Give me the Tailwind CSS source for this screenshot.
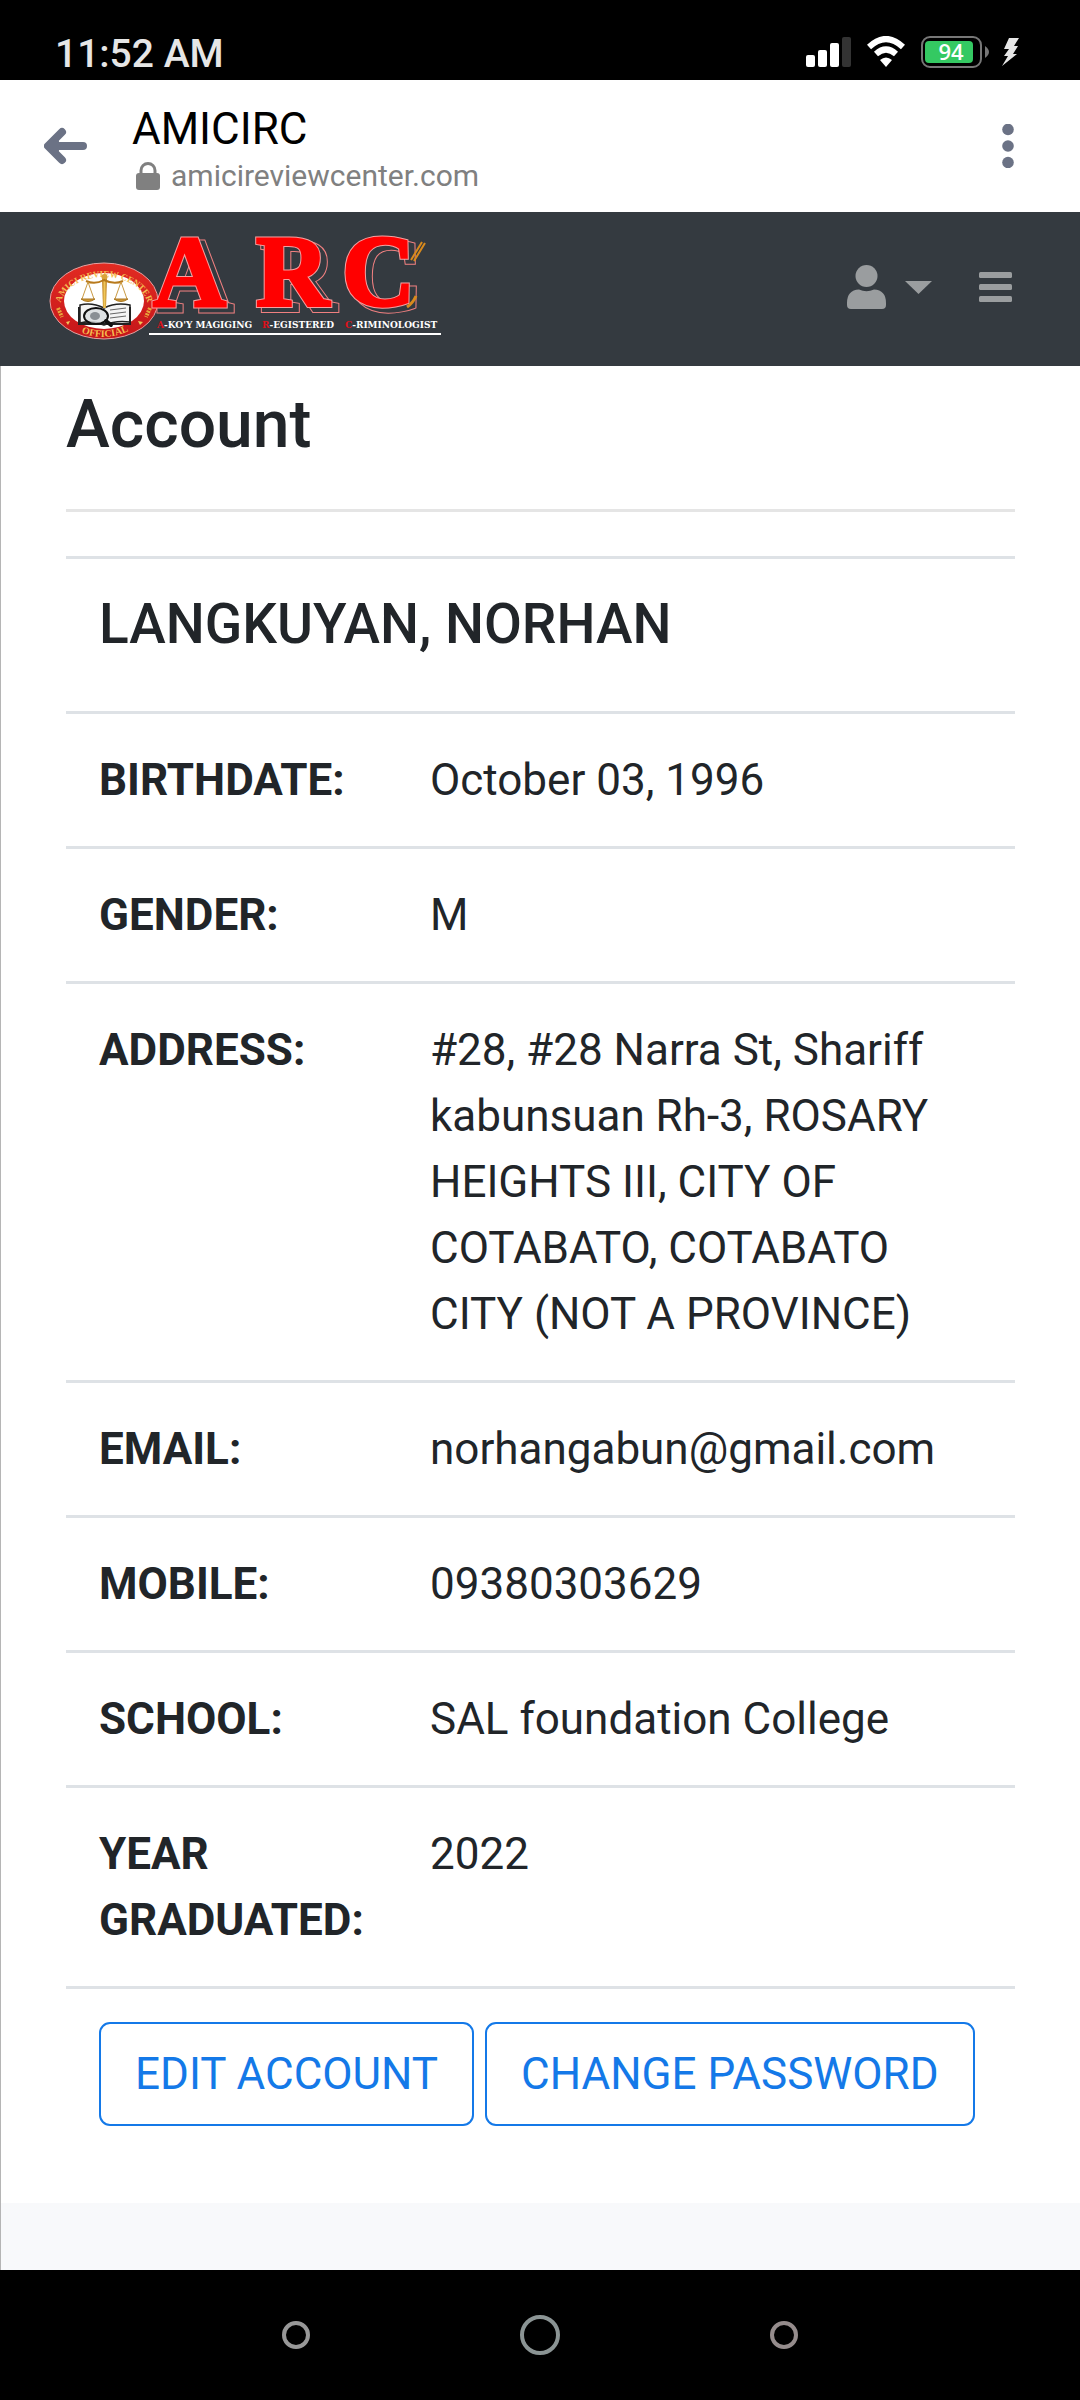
<!DOCTYPE html>
<html lang="en">
<head>
<meta charset="utf-8">
<meta name="viewport" content="width=device-width, initial-scale=1">
<title>AMICIRC</title>
<script src="https://cdn.jsdelivr.net/npm/@tailwindcss/browser@4"></script>
</head>
<body class="flex min-h-screen flex-col bg-black font-[Roboto,sans-serif] text-[#212529]">

<!-- Phone status bar -->
<div class="flex h-20 shrink-0 items-end justify-between bg-black pr-[61px] pb-1 pl-[55px]">
  <span class="text-[39px] leading-[44px] font-medium text-[#e6e6e6]">11:52 AM</span>
  <div class="flex h-12 items-center gap-[16px]">
    <svg class="h-8 w-[45px]" viewBox="0 0 45 32" aria-hidden="true">
      <rect x="0" y="19" width="9" height="12" rx="2" fill="#fff"/><rect x="12" y="14" width="9" height="17" rx="2" fill="#fff"/><rect x="24" y="7" width="9" height="24" rx="2" fill="#fff"/><rect x="36" y="1" width="9" height="30" rx="2" fill="#333"/>
    </svg>
    <svg class="h-8 w-[38px]" viewBox="0 0 38 32" aria-hidden="true">
      <path d="M2 11Q19-5 36 11" fill="none" stroke="#fff" stroke-width="6"/>
      <path d="M9 18Q19 9 29 18" fill="none" stroke="#fff" stroke-width="6"/>
      <path d="M13 24Q19 19 25 24L19 31Z" fill="#fff"/>
    </svg>
    <svg class="h-8 w-[68px]" viewBox="0 0 68 32" role="img" aria-label="Battery 94 percent">
      <rect x="1" y="1" width="59" height="30" rx="8" fill="none" stroke="#777" stroke-width="2"/>
      <rect x="4" y="5" width="48" height="22" rx="4" fill="#34c962"/>
      <path d="M64 10Q72 16 64 22Z" fill="#777"/>
      <text x="30" y="24" text-anchor="middle" font-family="Open Sans, sans-serif" font-weight="600" font-size="22" fill="#fff">94</text>
    </svg>
    <svg class="-ml-1 h-8 w-[18px]" viewBox="0 0 18 32" aria-hidden="true">
      <path d="M8 2H18L13 10H17L12 18H16L1 30L7 20H3L8 13H3Z" fill="#e6e6e6"/>
    </svg>
  </div>
</div>

<!-- In-app browser bar -->
<header class="flex h-[132px] shrink-0 items-center bg-white pr-[58px] pl-[44px]">
  <button type="button" aria-label="Back" class="mr-11">
    <svg class="h-[38px] w-11" viewBox="0 0 44 38" fill="none" stroke="#6b7285" stroke-width="8" stroke-linecap="round" stroke-linejoin="round" aria-hidden="true"><path d="M18 5L4 19L18 33M5 19H39"/><path d="M12 15V23" stroke-width="6"/></svg>
  </button>
  <div class="min-w-0 grow pt-[6px]">
    <div class="text-[44px] leading-[54px] text-black">AMICIRC</div>
    <div class="flex items-center gap-[11px] pl-1 text-[30px] leading-10 text-[#808080]">
      <svg class="h-7 w-6" viewBox="0 0 24 28" aria-hidden="true"><rect x="0" y="11" width="24" height="17" rx="3" fill="#808080"/><path d="M5 12V8.500A7 7 0 0 1 19 8.500V12" fill="none" stroke="#808080" stroke-width="3"/></svg>
      <span>amicireviewcenter.com</span>
    </div>
  </div>
  <button type="button" aria-label="More options" class="px-2">
    <svg class="h-11 w-3" viewBox="0 0 12 44" fill="#6b7285" aria-hidden="true"><circle cx="6" cy="5.500" r="5.800"/><circle cx="6" cy="22" r="5.800"/><circle cx="6" cy="38.500" r="5.800"/></svg>
  </button>
</header>

<!-- Site navigation -->
<nav class="flex h-[154px] shrink-0 items-center justify-between bg-[#343a40] pr-[68px] pl-[44px]">
  <a href="#" aria-label="Amici Review Center">
    <svg class="h-[154px] w-[402px]" viewBox="44 212 402 154">
      <defs>
        <linearGradient id="ring" x1="0" y1="0" x2="0" y2="1"><stop offset="0" stop-color="#e22b22"/><stop offset="1" stop-color="#c5161a"/></linearGradient>
        <linearGradient id="gold" x1="0" y1="0" x2="1" y2="0"><stop offset="0" stop-color="#b87a1c"/><stop offset=".5" stop-color="#f0c75a"/><stop offset="1" stop-color="#b87a1c"/></linearGradient>
        <path id="sealTop" d="M60 308A44 31 0 1 1 148 308"/>
        <path id="sealBottom" d="M72 328Q104 347 138 326"/>
      </defs>
      <ellipse cx="104" cy="301" rx="54" ry="38" fill="url(#ring)" stroke="#e8a0a0"/>
      <ellipse cx="104" cy="301" rx="40" ry="28" fill="#fff"/>
      <g font-family="Liberation Serif, serif" font-weight="700" font-size="9" fill="#f4bc50">
        <text><textPath href="#sealTop" startOffset="50%" text-anchor="middle">AMICI REVIEW CENTER</textPath></text>
        <text font-size="10"><textPath href="#sealBottom" startOffset="50%" text-anchor="middle">OFFICIAL</textPath></text>
      </g>
      <path d="M58 308L62 317M150 308L146 317" stroke="#e8a83c" stroke-width="4" stroke-dasharray="2 1"/>
      <path d="M66 322L70 321L68 325ZM138 321L143 322L140 325Z" fill="#f0c75a"/>
      <!-- open book -->
      <path d="M80 305Q92 302 104 308Q116 302 130 305V322Q116 320 104 325Q92 320 80 323Z" fill="#f4f4f4" stroke="#222" stroke-width="1.500"/>
      <path d="M79 307V324H130V307" fill="none" stroke="#222" stroke-width="2"/>
      <path d="M110 310L126 308M110 314L126 312M110 318L126 316" stroke="#666"/>
      <!-- scales -->
      <path d="M102 279H107L106 308H103Z" fill="url(#gold)"/>
      <circle cx="104.500" cy="277" r="3" fill="#d9a33c"/>
      <path d="M86 281Q95 285 104 280Q114 285 123 281" fill="none" stroke="#b87a1c" stroke-width="2"/>
      <path d="M88 282L82 299M88 282L94 299M121 282L115 299M121 282L127 299" fill="none" stroke="#c99a44" stroke-width="1"/>
      <path d="M81 299H95Q88 304 81 299ZM114 299H128Q121 304 114 299Z" fill="#d09a35" stroke="#a87520"/>
      <!-- magnifier -->
      <ellipse cx="96" cy="316" rx="12" ry="8" fill="#d8dcdf" fill-opacity=".8" stroke="#111" stroke-width="2"/>
      <ellipse cx="95" cy="316" rx="5" ry="4" fill="#8a8f94"/>
      <path d="M106 321L111 325" stroke="#111" stroke-width="4" stroke-linecap="round"/>
      <!-- wordmark with an offset outline behind it -->
      <use href="#word" x="6" y="4" fill="#f08080" stroke="#f08080" stroke-width="7"/>
      <use href="#word" x="6" y="4" fill="#343a40" stroke="#343a40" stroke-width="5"/>
      <use href="#word" fill="#f5a0a0" stroke="#f5a0a0" stroke-width="5"/>
      <g fill="#f00" stroke="#f00" stroke-width="3">
        <text id="word" x="153 256 342" y="306" font-family="Liberation Serif, serif" font-weight="700" font-size="101">ARC</text>
      </g>
      <path d="M414 261L425 243M411 260L422 242" fill="none" stroke="#d98a1c" stroke-width="2"/>
      <path d="M416 296Q413 303 407 307" fill="none" stroke="#d98a1c" stroke-width="3"/>
      <text y="328" font-family="DejaVu Serif, serif" font-weight="700" font-size="9" fill="#fff"><tspan x="157" fill="#e0101a">A</tspan>-KO'Y MAGIGING <tspan x="262" fill="#e0101a">R</tspan>-EGISTERED <tspan x="345" fill="#e0101a">C</tspan>-RIMINOLOGIST</text>
      <path d="M149 334H441" stroke="#fff" stroke-width="2"/>
    </svg>
  </a>
  <div class="flex items-center gap-[47px] pb-1">
    <button type="button" aria-label="User menu" class="flex items-center gap-[19px]">
      <svg class="h-11 w-[39px]" viewBox="0 0 39 44" fill="#9a9d9f" aria-hidden="true"><ellipse cx="19.500" cy="11" rx="11" ry="11"/><path d="M0 38Q0 25 12 24.500Q19.500 28 27 24.500Q39 25 39 38V40Q39 44 35 44H4Q0 44 0 40Z"/></svg>
      <svg class="h-[13px] w-[27px]" viewBox="0 0 27 13" fill="#9a9d9f" aria-hidden="true"><path d="M0 0H27L13.500 13Z"/></svg>
    </button>
    <button type="button" aria-label="Toggle navigation">
      <svg class="h-8 w-[33px]" viewBox="0 0 33 32" fill="#9a9d9f" aria-hidden="true"><rect y="1" width="33" height="6" rx="1.500"/><rect y="13" width="33" height="6" rx="1.500"/><rect y="25" width="33" height="6" rx="1.500"/></svg>
    </button>
  </div>
</nav>

<!-- Account page -->
<div class="flex grow flex-col border-l border-[#b5b5b5] bg-[#f8f9fb]">
  <main class="bg-white px-[65px] pt-[19px] pb-[77px]">
    <h1 class="text-[66px] leading-[80px] font-medium">Account</h1>
    <hr class="mt-11 mb-11 border-t-[3px] border-[#e5e5e5]">
    <table class="w-full table-fixed border-collapse text-left text-[44px] leading-[66px]">
      <colgroup><col class="w-[331px]"><col></colgroup>
      <tbody>
        <tr class="border-t-[3px] border-[#dee2e6]">
          <td colspan="2" class="px-[33px] pt-8 pb-[54px]"><h2 class="text-[55px] leading-[66px] font-medium">LANGKUYAN, NORHAN</h2></td>
        </tr>
        <tr class="border-t-[3px] border-[#dee2e6] align-top">
          <th scope="row" class="p-[33px] font-bold">BIRTHDATE:</th><td class="p-[33px]">October 03, 1996</td>
        </tr>
        <tr class="border-t-[3px] border-[#dee2e6] align-top">
          <th scope="row" class="p-[33px] font-bold">GENDER:</th><td class="p-[33px]">M</td>
        </tr>
        <tr class="border-t-[3px] border-[#dee2e6] align-top">
          <th scope="row" class="p-[33px] font-bold">ADDRESS:</th><td class="p-[33px]">#28, #28 Narra St, Shariff kabunsuan Rh-3, ROSARY HEIGHTS III, CITY OF COTABATO, COTABATO CITY (NOT A PROVINCE)</td>
        </tr>
        <tr class="border-t-[3px] border-[#dee2e6] align-top">
          <th scope="row" class="p-[33px] font-bold">EMAIL:</th><td class="p-[33px]">norhangabun@gmail.com</td>
        </tr>
        <tr class="border-t-[3px] border-[#dee2e6] align-top">
          <th scope="row" class="p-[33px] font-bold">MOBILE:</th><td class="p-[33px]">09380303629</td>
        </tr>
        <tr class="border-t-[3px] border-[#dee2e6] align-top">
          <th scope="row" class="p-[33px] font-bold">SCHOOL:</th><td class="p-[33px]">SAL foundation College</td>
        </tr>
        <tr class="border-t-[3px] border-[#dee2e6] align-top">
          <th scope="row" class="p-[33px] font-bold">YEAR GRADUATED:</th><td class="p-[33px]">2022</td>
        </tr>
        <tr class="border-t-[3px] border-[#dee2e6]">
          <td colspan="2" class="px-[33px] pt-[33px]">
            <div class="flex flex-wrap gap-[11px] text-[#1479e8]">
              <button type="button" class="rounded-[11px] border-2 border-[#1479e8] px-[34px] py-[17px]">EDIT ACCOUNT</button>
              <button type="button" class="rounded-[11px] border-2 border-[#1479e8] px-[34px] py-[17px]">CHANGE PASSWORD</button>
            </div>
          </td>
        </tr>
      </tbody>
    </table>
  </main>
</div>

<!-- Phone navigation keys -->
<div class="flex h-[130px] shrink-0 items-center justify-center gap-[210px] bg-black">
  <button type="button" aria-label="Recent apps" class="size-7 rounded-full border-4 border-[#989898]"></button>
  <button type="button" aria-label="Home" class="size-10 rounded-full border-4 border-[#8b9494]"></button>
  <button type="button" aria-label="Back" class="size-7 rounded-full border-4 border-[#958c8c]"></button>
</div>
</body>
</html>
